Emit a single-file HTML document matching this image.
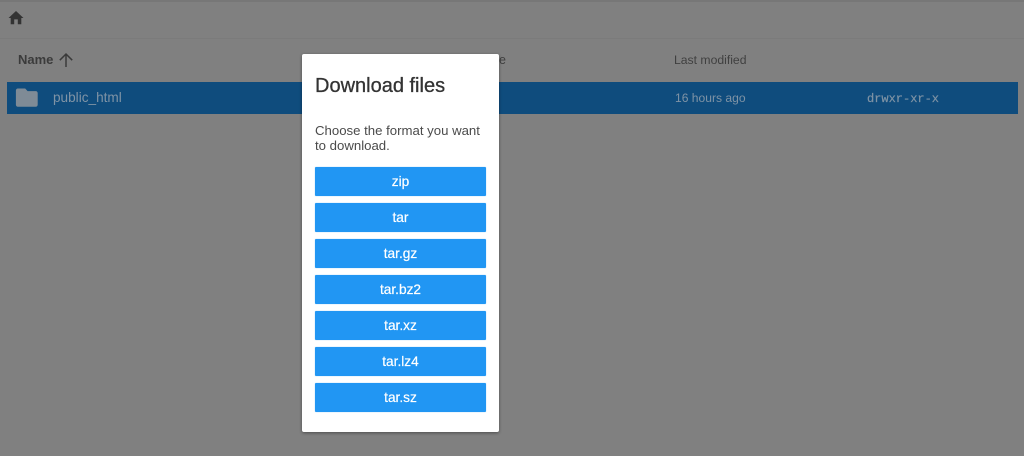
<!DOCTYPE html>
<html><head><meta charset="utf-8">
<style>
html,body{margin:0;padding:0;width:1024px;height:456px;overflow:hidden;background:#808080;font-family:"Liberation Sans",sans-serif}
.a{position:absolute;white-space:nowrap}
.btn{position:absolute;left:315px;width:171px;height:29px;background:#2196f3;border-radius:1px;color:#fff;font-size:13.7px;font-weight:400;line-height:30px;text-align:center;box-shadow:0 0 1px rgba(33,150,243,.5);-webkit-text-stroke:.2px #fff}
</style></head><body>
<div class="a" style="left:0;top:0;width:1024px;height:2px;background:#777"></div>
<div class="a" style="left:0;top:38px;width:1024px;height:1px;background:#7b7b7b"></div>
<svg class="a" style="left:8px;top:10px" width="16" height="15" viewBox="0 0 16 15"><path d="M6.2 14.2V9.4h3.6v4.8h3.5V8h2.2L8 1 .5 8h2.2v6.2z" fill="#333"/></svg>
<div class="a" style="left:18px;top:52px;font-size:13px;font-weight:700;color:#3b3b3b;line-height:16px">Name</div>
<svg class="a" style="left:58px;top:52px" width="16" height="16" viewBox="0 0 16 16"><path d="M8 15V2M1.8 8.2 8 2l6.2 6.2" fill="none" stroke="#3a3a3a" stroke-width="1.5"/></svg>
<div class="a" style="left:674px;top:52px;font-size:12.2px;color:#404040;line-height:16px">Last modified</div>
<div class="a" style="left:7px;top:82px;width:1011px;height:32px;background:#0f4c7d"></div>
<svg class="a" style="left:15px;top:87px" width="24" height="22" viewBox="0 0 24 22"><path d="M2.8 1.5h7.4l2.4 2.6h8.2c1.1 0 1.9.9 1.9 2v11.7c0 1.1-.8 2-1.9 2H2.8c-1.1 0-1.9-.9-1.9-2V3.5c0-1.1.8-2 1.9-2z" fill="#7f8b96"/></svg>
<div class="a" style="left:53px;top:89px;font-size:13.6px;color:#7f93a5;line-height:17px">public_html</div>
<div class="a" style="left:675px;top:90px;font-size:12.1px;color:#7f93a5;line-height:16px">16 hours ago</div>
<div class="a" style="left:867px;top:91px;font-family:'Liberation Mono',monospace;font-size:12px;color:#7f93a5;line-height:16px;-webkit-text-stroke:.2px #7f93a5">drwxr-xr-x</div>
<div class="a" style="left:499px;top:52px;font-size:12.5px;color:#404040;line-height:16px">e</div>
<div class="a" style="left:302px;top:54px;width:197px;height:378px;background:#fff;border-radius:2px;box-shadow:0 1px 3px rgba(0,0,0,.4)"></div>
<div class="a" style="left:315px;top:74px;font-size:20px;font-weight:400;color:#333;line-height:24px;-webkit-text-stroke:.3px #333">Download files</div>
<div class="a" style="left:315px;top:123px;font-size:13.2px;color:#4b4b4b;line-height:15px">Choose the format you want<br>to download.</div>
<div class="btn" style="top:167px">zip</div>
<div class="btn" style="top:203px">tar</div>
<div class="btn" style="top:239px">tar.gz</div>
<div class="btn" style="top:275px">tar.bz2</div>
<div class="btn" style="top:311px">tar.xz</div>
<div class="btn" style="top:347px">tar.lz4</div>
<div class="btn" style="top:383px">tar.sz</div>
</body></html>
